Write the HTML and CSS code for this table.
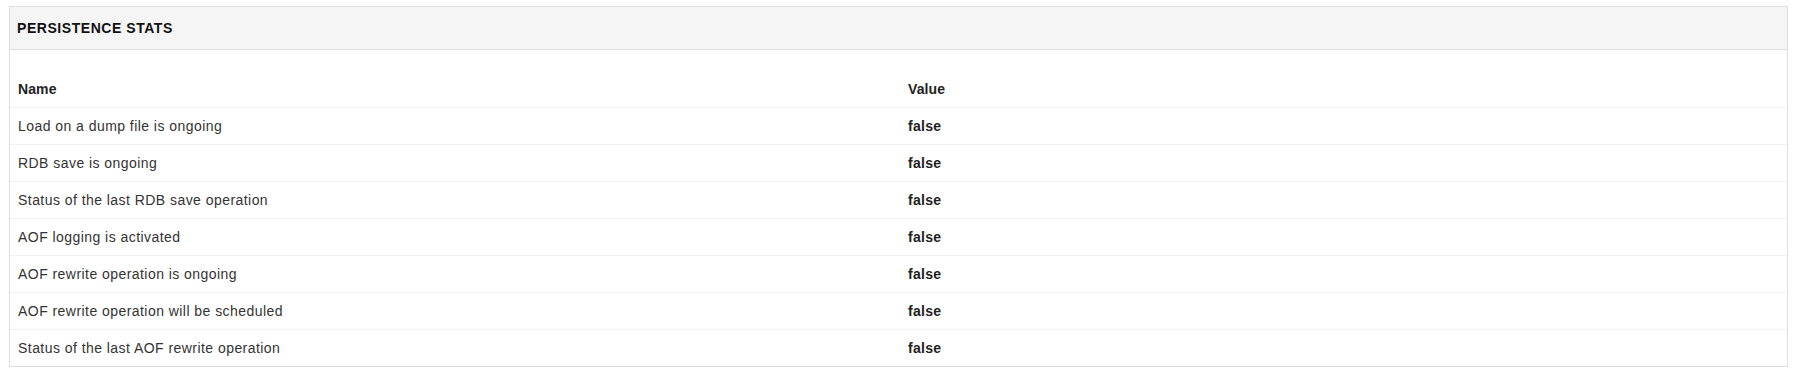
FILE: index.html
```html
<!DOCTYPE html>
<html>
<head>
<meta charset="utf-8">
<link rel="stylesheet" href="styles.css">
</head>
<body>
<div class="page">
  <div class="panel">
    <div class="panel-heading">Persistence Stats</div>
    <div class="panel-body">
      <table class="stats">
        <thead>
          <tr><th class="col-name">Name</th><th>Value</th></tr>
        </thead>
        <tbody>
          <tr><td>Load on a dump file is ongoing</td><td class="val">false</td></tr>
          <tr><td>RDB save is ongoing</td><td class="val">false</td></tr>
          <tr><td>Status of the last RDB save operation</td><td class="val">false</td></tr>
          <tr><td>AOF logging is activated</td><td class="val">false</td></tr>
          <tr><td>AOF rewrite operation is ongoing</td><td class="val">false</td></tr>
          <tr><td>AOF rewrite operation will be scheduled</td><td class="val">false</td></tr>
          <tr><td>Status of the last AOF rewrite operation</td><td class="val">false</td></tr>
        </tbody>
      </table>
    </div>
  </div>
</div>
</body>
</html>
```
FILE: styles.css
```css
html, body {
  margin: 0;
  padding: 0;
  background: #fff;
}
body {
  font-family: "Liberation Sans", Arial, sans-serif;
  font-size: 14px;
  line-height: 20px;
  color: #333;
}
.page {
  padding: 6px 14px 0 9px;
}
.panel {
  border: 1px solid #dedede;
  background: #fff;
}
.panel-heading {
  background: #f5f5f5;
  border-bottom: 1px solid #dedede;
  height: 42px;
  line-height: 42px;
  padding: 0 7px;
  font-weight: bold;
  font-size: 14px;
  text-transform: uppercase;
  letter-spacing: 0.55px;
  color: #111;
}
.panel-body {
  padding-top: 21px;
}
.stats {
  width: 100%;
  border-collapse: collapse;
  table-layout: fixed;
}
.stats th {
  text-align: left;
  font-weight: bold;
  padding: 8px;
  color: #222;
  letter-spacing: 0.1px;
}
.stats .col-name {
  width: 874px;
}
.stats td {
  padding: 8px;
  border-top: 1px solid #f1f1f1;
  letter-spacing: 0.45px;
}
.stats td.val {
  font-weight: bold;
  color: #222;
  letter-spacing: 0.3px;
}
```
